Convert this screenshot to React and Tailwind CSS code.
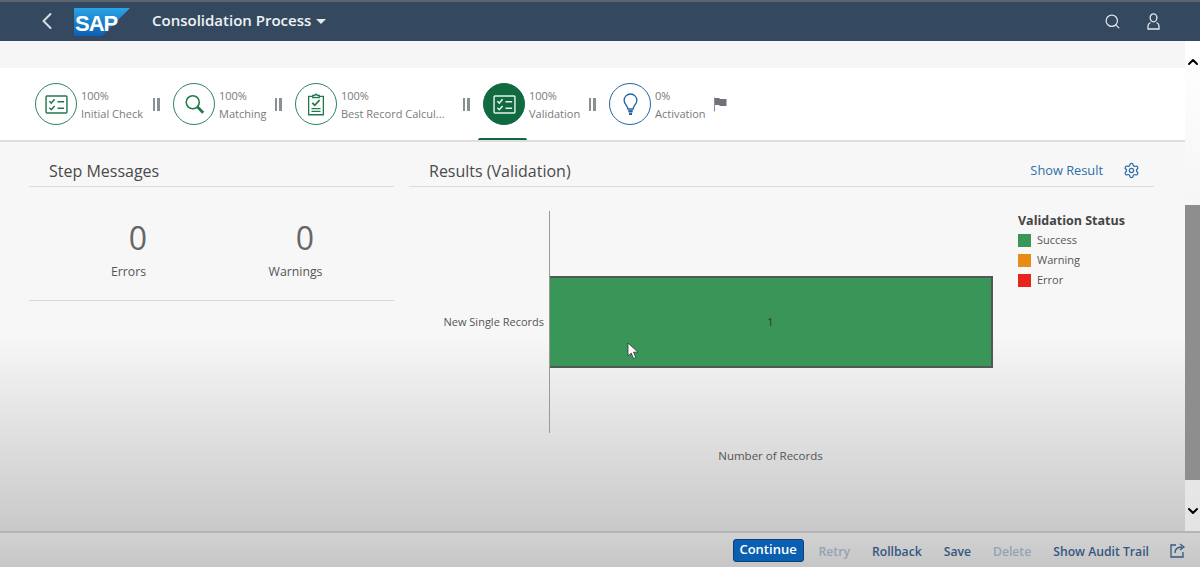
import React from "react";
import { ChevronLeft, ChevronUp, ChevronDown, Search, Settings } from "lucide-react";

const GREEN = "#1f7a4d";

const ChecklistIcon = ({ color = GREEN }) => (
  <svg width="23" height="19" viewBox="0 0 24 20" fill="none" stroke={color} strokeWidth="1.5">
    <rect x="1" y="1" width="22" height="18" rx="1" />
    <path d="M4.500 6.500l2 2 3.500-4M4.500 13.500l2 2 3.500-4" strokeWidth="1.600" />
    <path d="M13 7h7M13 14h7" strokeWidth="1.600" />
  </svg>
);

const MagnifierIcon = () => (
  <svg width="21" height="20" viewBox="0 0 24 23" fill="none" stroke={GREEN}>
    <circle cx="10" cy="9.500" r="7.500" strokeWidth="1.800" />
    <path d="M15.500 15L22 21.500" strokeWidth="3.200" />
  </svg>
);

const ClipboardIcon = () => (
  <svg width="18" height="23" viewBox="0 0 22 28" fill="none" stroke={GREEN} strokeWidth="1.600">
    <path d="M7 4H2v22.500h18V4h-5" />
    <path d="M7 5.500V3h2.500a1.500 1.500 0 0 1 3 0H15v2.500z" />
    <path d="M6.500 12l3 3 6-6.500" strokeWidth="2.200" />
    <path d="M5.500 19h11M5.500 22.500h11" />
  </svg>
);

const BulbIcon = () => (
  <svg width="15" height="23" viewBox="0 0 20 30" fill="none" stroke="#23659f" strokeWidth="1.800">
    <path d="M6.500 21c0-4-5-6.500-5-11.500a8.500 8.500 0 0 1 17 0c0 5-5 7.500-5 11.500z" />
    <path d="M7 24h6" strokeWidth="3" />
    <path d="M8 27.500h4" strokeWidth="3" />
  </svg>
);

const UserIcon = () => (
  <svg width="13" height="17" viewBox="0 0 13 17" fill="none" stroke="#e3e7eb" strokeWidth="1.300">
    <ellipse cx="6.500" cy="4.800" rx="3.400" ry="4" />
    <path d="M3.500 9.500C2 10.200 1 11.500 1 13v3h11v-3c0-1.500-1-2.800-2.500-3.500" />
  </svg>
);

const SapLogo = () => (
  <svg width="56" height="28" viewBox="0 0 56 28" className="shrink-0">
    <defs>
      <linearGradient id="sapBlue" x1="0" y1="0" x2="0" y2="1">
        <stop offset="0" stopColor="#2ba4e6" />
        <stop offset="1" stopColor="#0a5fb4" />
      </linearGradient>
    </defs>
    <path d="M0 0h56L28 28H0z" fill="url(#sapBlue)" />
    <text x="1" y="23" fill="#fff" fontFamily="Liberation Sans" fontWeight="700" fontSize="22" letterSpacing="-1">
      SAP
    </text>
  </svg>
);

const Step = ({ width, icon, percent, label, filled, active, blue }) => (
  <div className={`relative flex items-center gap-1 h-full ${width}`}>
    <div
      className={`w-[42px] h-[42px] rounded-full flex items-center justify-center shrink-0 border-[1.5px] ${
        filled ? "bg-[#0f6b3f] border-[#0f6b3f]" : blue ? "border-[#23659f] bg-white" : "border-[#2c8560] bg-white"
      }`}
    >
      {icon}
    </div>
    <div className="text-[11px] leading-[18px] text-[#7a7a7a] whitespace-nowrap mt-[1px]">
      <div>{percent}</div>
      <div>{label}</div>
    </div>
    {active && <div className="absolute left-[-5px] bottom-0 w-[49px] h-[2px] bg-[#0f6b3f] rounded-t" />}
  </div>
);

const Sep = () => (
  <div className="flex gap-[2px] w-[8px] h-[13px] mr-[13px] justify-center shrink-0">
    <div className="w-[2.5px] bg-[#8a8f94]" />
    <div className="w-[2.5px] bg-[#8a8f94]" />
  </div>
);

const LegendItem = ({ color, label }) => (
  <div className="flex items-center gap-[6px] h-[20px] text-[11px] text-[#555]">
    <div className={`w-[13px] h-[13px] ${color}`} />
    <span>{label}</span>
  </div>
);

const FooterLink = ({ children, disabled }) => (
  <span className={`text-[12.2px] font-semibold ${disabled ? "text-[#93a3b3]" : "text-[#33587f]"}`}>{children}</span>
);

export default function App() {
  return (
    <div
      className="relative w-[1200px] h-[567px] overflow-hidden flex flex-col bg-white"
      style={{ fontFamily: '"Open Sans", "Liberation Sans", sans-serif' }}
    >
      {/* shell header */}
      <header className="h-[41px] shrink-0 bg-[#34495f] border-t-2 border-[#5b6670] flex items-center text-white">
        <ChevronLeft size={28} strokeWidth={1.7} className="ml-[33px] text-[#d5dde5] -mt-[1px]" />
        <div className="ml-[13px] flex">
          <SapLogo />
        </div>
        <div className="ml-[22px] text-[15px] font-semibold text-[#f0f2f4] whitespace-nowrap -mt-[2px]">Consolidation Process</div>
        <div className="ml-[5px] w-0 h-0 border-x-[5px] border-x-transparent border-t-[5px] border-t-[#e6eaee]" />
        <Search size={17} strokeWidth={1.7} className="ml-auto text-[#e3e7eb]" />
        <div className="ml-[26px] mr-[40px] flex">
          <UserIcon />
        </div>
      </header>

      <div className="flex flex-1 min-h-0">
        <main className="flex-1 flex flex-col min-w-0">
          <div className="h-[27px] shrink-0 bg-[#f6f6f6]" />

          {/* process steps */}
          <div className="h-[74px] shrink-0 bg-white border-b-2 border-[#dedede] flex items-center pl-[35px]">
            <Step width="w-[117px]" icon={<ChecklistIcon />} percent="100%" label="Initial Check" />
            <Sep />
            <Step width="w-[101px]" icon={<MagnifierIcon />} percent="100%" label="Matching" />
            <Sep />
            <Step width="w-[167px]" icon={<ClipboardIcon />} percent="100%" label="Best Record Calcul..." />
            <Sep />
            <Step width="w-[105px]" icon={<ChecklistIcon color="#e8f2ec" />} percent="100%" label="Validation" filled active />
            <Sep />
            <Step width="w-[105px]" icon={<BulbIcon />} percent="0%" label="Activation" blue />
            <svg width="13" height="15" viewBox="0 0 13 15" className="shrink-0 mt-[1px]">
              <path d="M0.500 0.500v14" stroke="#8a8f94" strokeWidth="1" />
              <path d="M1 1h4l1 1h6.500v7H6l-1-1H1z" fill="#6d7378" />
            </svg>
          </div>

          {/* content */}
          <div className="flex-1 min-h-0 flex pl-[29px] pr-[31px] bg-gradient-to-b from-[#f7f7f7] from-50% to-[#c9c9c9]">
            <section className="w-[365px] shrink-0">
              <div className="h-[45px] flex items-center pl-[20px] pt-[13px] border-b border-[#dcdcdc]">
                <h2 className="text-[16px] text-[#4a4a4a]">Step Messages</h2>
              </div>
              <div className="h-[114px] border-b border-[#d6d6d6] flex text-[#555]">
                <div className="w-[199px] flex flex-col items-center pt-[29px]">
                  <div className="text-[32px] leading-[44px] pl-[19px] text-[#666]">0</div>
                  <div className="text-[12.3px] leading-[18px] mt-[3px]">Errors</div>
                </div>
                <div className="w-[135px] flex flex-col items-center pt-[29px]">
                  <div className="text-[32px] leading-[44px] pl-[19px] text-[#666]">0</div>
                  <div className="text-[12.3px] leading-[18px] mt-[3px]">Warnings</div>
                </div>
              </div>
            </section>

            <section className="ml-[15px] flex-1 min-w-0">
              <div className="h-[45px] flex items-center pl-[20px] pt-[13px] border-b border-[#dcdcdc]">
                <h2 className="text-[16px] text-[#4a4a4a]">Results (Validation)</h2>
                <span className="ml-auto text-[12.8px] text-[#2f6ea8] mt-[1px]">Show Result</span>
                <Settings size={17} strokeWidth={1.8} className="ml-[20px] mr-[14px] text-[#2f6ea8]" />
              </div>

              {/* chart */}
              <div className="flex mt-[24px]">
                <div className="w-[141px] h-[222px] border-r border-[#9a9a9a] flex items-center justify-end pr-[5px] text-[11px] text-[#555]">
                  New Single Records
                </div>
                <div className="w-[443px] h-[222px] flex items-center">
                  <div className="w-full h-[92px] bg-[#3a9558] border-2 border-[#4e5a54] border-l-0 flex items-center justify-center text-[11px] text-[#2c3a30]">
                    1
                  </div>
                </div>
                <div className="ml-[25px] mt-[1px]">
                  <div className="text-[12.5px] font-bold text-[#444] leading-[18px] whitespace-nowrap">Validation Status</div>
                  <LegendItem color="bg-[#3a9558]" label="Success" />
                  <LegendItem color="bg-[#e78c14]" label="Warning" />
                  <LegendItem color="bg-[#e8231b]" label="Error" />
                </div>
              </div>
              <div className="w-[723px] text-center text-[11.5px] text-[#555] mt-[14px]">Number of Records</div>
            </section>
          </div>
        </main>

        {/* scrollbar */}
        <aside className="w-[15px] shrink-0 flex flex-col items-center bg-gradient-to-b from-white to-[#e4e4e4]">
          <ChevronUp size={16} strokeWidth={3} className="mt-[13px] text-black" />
          <div className="w-full h-[275px] mt-[135px] bg-[#8e8e8e]" />
          <ChevronDown size={16} strokeWidth={3} className="mt-[23px] text-black" />
        </aside>
      </div>

      {/* footer */}
      <footer className="h-[36px] shrink-0 border-t-2 border-[#b5b5b5] bg-gradient-to-b from-[#d2d2d2] to-[#c6c6c6] flex items-center justify-end pr-[14px]">
        <button className="h-[23px] w-[71px] rounded-[3px] bg-[#0a5fb0] border border-[#0b3f78] text-white text-[13px] font-semibold">
          Continue
        </button>
        <div className="ml-[15px] -mt-[1px]"><FooterLink disabled>Retry</FooterLink></div>
        <div className="ml-[22px] -mt-[1px]"><FooterLink>Rollback</FooterLink></div>
        <div className="ml-[22px] -mt-[1px]"><FooterLink>Save</FooterLink></div>
        <div className="ml-[22px] -mt-[1px]"><FooterLink disabled>Delete</FooterLink></div>
        <div className="ml-[22px] -mt-[1px]"><FooterLink>Show Audit Trail</FooterLink></div>
        <svg width="16" height="16" viewBox="0 0 16 16" fill="none" stroke="#33587f" strokeWidth="1.300" className="ml-[21px]">
          <path d="M6 3H1v12h12v-5" />
          <path d="M5 11c0-4 3-6 7-6M10 2l4 3-4 3" />
        </svg>
      </footer>

      {/* mouse pointer */}
      <svg width="13" height="18" viewBox="0 0 13 18" className="absolute left-[627px] top-[342px]">
        <path d="M1 1v13l3.200-3 2.300 5.500 2.300-1-2.300-5.300H11z" fill="#fff" stroke="#333" strokeWidth="0.800" />
      </svg>
    </div>
  );
}
